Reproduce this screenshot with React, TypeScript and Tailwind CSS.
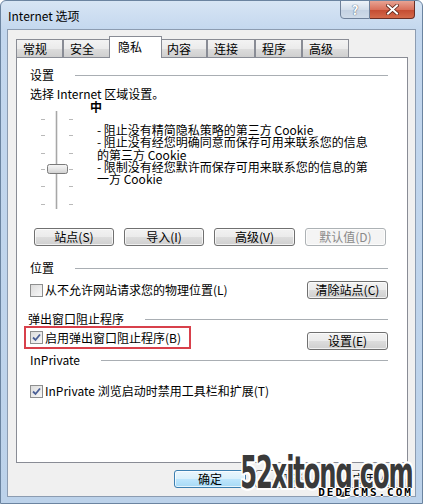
import { ReactNode } from "react";

const cjk = "font-['Noto_Sans_CJK_SC','Noto_Sans',sans-serif]";

const tabs = [
  { label: "常规", w: "w-[47px]" },
  { label: "安全", w: "w-[48px]" },
  { label: "隐私", w: "w-[53px]", active: true },
  { label: "内容", w: "w-[47px]" },
  { label: "连接", w: "w-[48px]" },
  { label: "程序", w: "w-[47px]" },
  { label: "高级", w: "w-[47px]" },
];

function Button({ children, className = "", disabled = false, isDefault = false }: { children: ReactNode; className?: string; disabled?: boolean; isDefault?: boolean }) {
  const tone = disabled
    ? "border-[#adb2b5] bg-[#f4f4f4] text-[#8a8a8a]"
    : isDefault
      ? "border-[#3c7fb1] bg-[linear-gradient(#eaf6fd_0%,#d9f0fc_50%,#bee6fd_51%,#a7d9f5_100%)] text-black"
      : "border-[#707070] bg-[linear-gradient(#f2f2f2_0%,#ebebeb_50%,#dddddd_51%,#cfcfcf_100%)] text-black";
  return (
    <div className={`flex h-[18px] items-center justify-center rounded-[3px] border text-[12px] leading-none shadow-[inset_0_0_0_1px_rgba(255,255,255,0.7)] ${tone} ${className}`}>
      {children}
    </div>
  );
}

function Checkbox({ checked = false }: { checked?: boolean }) {
  return (
    <div className="flex h-[13px] w-[13px] shrink-0 items-center justify-center border border-[#8e8f8f] bg-[linear-gradient(135deg,#dcdcdc,#f8f8f8)] p-[1px]">
      {checked && (
        <svg width="9" height="9" viewBox="0 0 9 9">
          <path d="M1 4.5 L3.5 7 L8 1.5" fill="none" stroke="#4a5f96" strokeWidth="1.8" />
        </svg>
      )}
    </div>
  );
}

function GroupHeader({ title, className = "" }: { title: string; className?: string }) {
  return (
    <div className={`flex h-[14px] items-center gap-[21px] ${className}`}>
      <span className="whitespace-nowrap text-[12px] leading-[14px]">{title}</span>
      <div className="h-px flex-1 bg-[#a9aeb3]" />
    </div>
  );
}

function Slider() {
  const ticks = [10, 26, 44, 60, 77, 95];
  return (
    <svg width="40" height="102" viewBox="0 0 40 102" className="mt-[8px] ml-[7px] shrink-0">
      <rect x="18" y="2" width="3" height="98" fill="#e6e6e6" />
      <rect x="19" y="2" width="1" height="98" fill="#a7a7a7" />
      {ticks.map((y) => (
        <g key={y}>
          <rect x="4" y={y} width="4" height="1" fill="#b9b9b9" />
          <rect x="32" y={y} width="4" height="1" fill="#b9b9b9" />
        </g>
      ))}
      <defs>
        <linearGradient id="thumb" x1="0" y1="0" x2="0" y2="1">
          <stop offset="0" stopColor="#f7f7f7" />
          <stop offset="0.5" stopColor="#e6e6e6" />
          <stop offset="1" stopColor="#cfcfcf" />
        </linearGradient>
      </defs>
      <rect x="10.5" y="55.5" width="20" height="9" rx="2" fill="url(#thumb)" stroke="#7a7a7a" />
    </svg>
  );
}

export default function App() {
  return (
    <div className={`flex h-[504px] w-[423px] flex-col overflow-hidden rounded-t-[6px] border border-[#6b84a0] bg-[linear-gradient(#d7e5f4,#c3d7ee_30px,#bcd2ea)] px-[6px] pb-[6px] text-black ${cjk}`}>
      {/* title bar */}
      <div className="relative flex h-[28px] shrink-0 items-start">
        <span className="mt-[7px] ml-[1px] text-[12px] leading-[16px]">Internet 选项</span>
        <div className="absolute top-[-1px] right-[1px] flex">
          <div className="flex h-[19px] w-[30px] items-center justify-center rounded-bl-[4px] border border-[#6f819a] bg-[linear-gradient(#eef3f9,#d3deeb_50%,#c3d1e2_51%,#cfdbe9)] text-[13px] font-bold leading-none text-white [text-shadow:0_0_1px_#55647a,0_0_1px_#55647a]">
            ?
          </div>
          <div className="flex h-[19px] w-[45px] items-center justify-center rounded-br-[4px] border border-l-0 border-[#6b2e25] bg-[linear-gradient(#e8a393,#d9715c_50%,#c44a31_51%,#d46a4b)]">
            <svg width="13" height="11" viewBox="0 0 13 11">
              <path d="M2 1.5 L11 9.5 M11 1.5 L2 9.5" stroke="#5a2318" strokeWidth="3.6" strokeLinecap="square" />
              <path d="M2 1.5 L11 9.5 M11 1.5 L2 9.5" stroke="#ffffff" strokeWidth="2" strokeLinecap="square" />
            </svg>
          </div>
        </div>
      </div>

      {/* client area */}
      <div className="flex flex-1 flex-col border border-[#8c9cb1] bg-[#f0f0f0] pt-[6px] pr-[7px] pl-[8px]">
        {/* tabs */}
        <div className="flex h-[21px] items-end">
          {tabs.map((t) =>
            t.active ? (
              <div key={t.label} className={`relative z-10 -mx-[2px] -mb-px flex h-[22px] items-start border border-b-0 border-[#898c95] bg-white pt-[2px] pl-[8px] text-[12px] leading-[16px] ${t.w}`}>
                {t.label}
              </div>
            ) : (
              <div key={t.label} className={`flex h-[18px] items-center border border-b-0 border-[#898c95] bg-[linear-gradient(#f3f3f3,#ebebeb_50%,#dddddd_51%,#cfcfcf)] pl-[6px] text-[12px] leading-[16px] ${t.w}`}>
                {t.label}
              </div>
            ),
          )}
        </div>

        {/* panel */}
        <div className="flex h-[406px] flex-col border border-[#898c95] bg-white pt-[10px] pr-[19px] pl-[13px] text-[12px]">
          <GroupHeader title="设置" />
          <div className="mt-[5px] h-[14px] leading-[14px]">选择 Internet 区域设置。</div>

          <div className="flex h-[108px]">
            <Slider />
            <div className="ml-[13px] flex flex-col">
              <div className="mt-[-1px] h-[14px] font-bold leading-[14px]">中</div>
              <div className="mt-[10px] pl-[7px] leading-[12.3px] whitespace-nowrap">
                <div>- 阻止没有精简隐私策略的第三方 Cookie</div>
                <div>- 阻止没有经您明确同意而保存可用来联系您的信息</div>
                <div>的第三方 Cookie</div>
                <div>- 限制没有经您默许而保存可用来联系您的信息的第</div>
                <div>一方 Cookie</div>
              </div>
            </div>
          </div>

          <div className="mt-[19px] ml-[4px] flex gap-[10px]">
            <Button className="w-[80px]">站点(S)</Button>
            <Button className="w-[80px]">导入(I)</Button>
            <Button className="w-[81px]">高级(V)</Button>
            <Button className="w-[81px]" disabled>
              默认值(D)
            </Button>
          </div>

          <GroupHeader title="位置" className="mt-[15px]" />
          <div className="mt-[6px] flex h-[18px] items-center justify-between">
            <div className="flex items-center gap-[2px]">
              <Checkbox />
              <span className="leading-[14px]">从不允许网站请求您的物理位置(L)</span>
            </div>
            <Button className="w-[81px]">清除站点(C)</Button>
          </div>

          <GroupHeader title="弹出窗口阻止程序" className="mt-[13px] -ml-[2px]" />
          <div className="flex h-[23px] items-start justify-between">
            <div className="-ml-[6px] flex h-[23px] w-[167px] items-center gap-[2px] border-2 border-[#d8404b] pl-[4px]">
              <Checkbox checked />
              <span className="leading-[14px] whitespace-nowrap">启用弹出窗口阻止程序(B)</span>
            </div>
            <Button className="mt-[6px] w-[81px]">设置(E)</Button>
          </div>

          <GroupHeader title="InPrivate" className="mt-[4px]" />
          <div className="mt-[17px] flex h-[14px] items-center gap-[2px]">
            <Checkbox checked />
            <span className="leading-[14px] whitespace-nowrap">InPrivate 浏览启动时禁用工具栏和扩展(T)</span>
          </div>
        </div>

        {/* bottom buttons */}
        <div className="relative mt-[7px] flex justify-end gap-[9px]">
          <Button className="w-[72px]" isDefault>
            确定
          </Button>
          <Button className="w-[72px]">取消</Button>
          <Button className="w-[72px]">应用(A)</Button>
          <div className="absolute top-[-17px] right-[-5px] flex flex-col items-end">
            <span className="origin-right scale-x-[0.55] font-['DejaVu_Sans',sans-serif] text-[44px] font-bold leading-[40px] tracking-[-2px] text-[#3a3a3a] [text-shadow:2px_0_0_#fff,-2px_0_0_#fff,0_2px_0_#fff,0_-2px_0_#fff,2px_2px_0_#fff,-2px_-2px_0_#fff,2px_-2px_0_#fff,-2px_2px_0_#fff]">
              52xitong.com
            </span>
            <span className="relative mt-[-6px] font-['DejaVu_Sans_Mono',monospace] text-[11px] leading-[11px] font-bold tracking-[2px] text-black [text-shadow:1px_0_0_#fff,-1px_0_0_#fff,0_1px_0_#fff,0_-1px_0_#fff]">
              DEDECMS.COM
            </span>
          </div>
        </div>
      </div>
    </div>
  );
}
